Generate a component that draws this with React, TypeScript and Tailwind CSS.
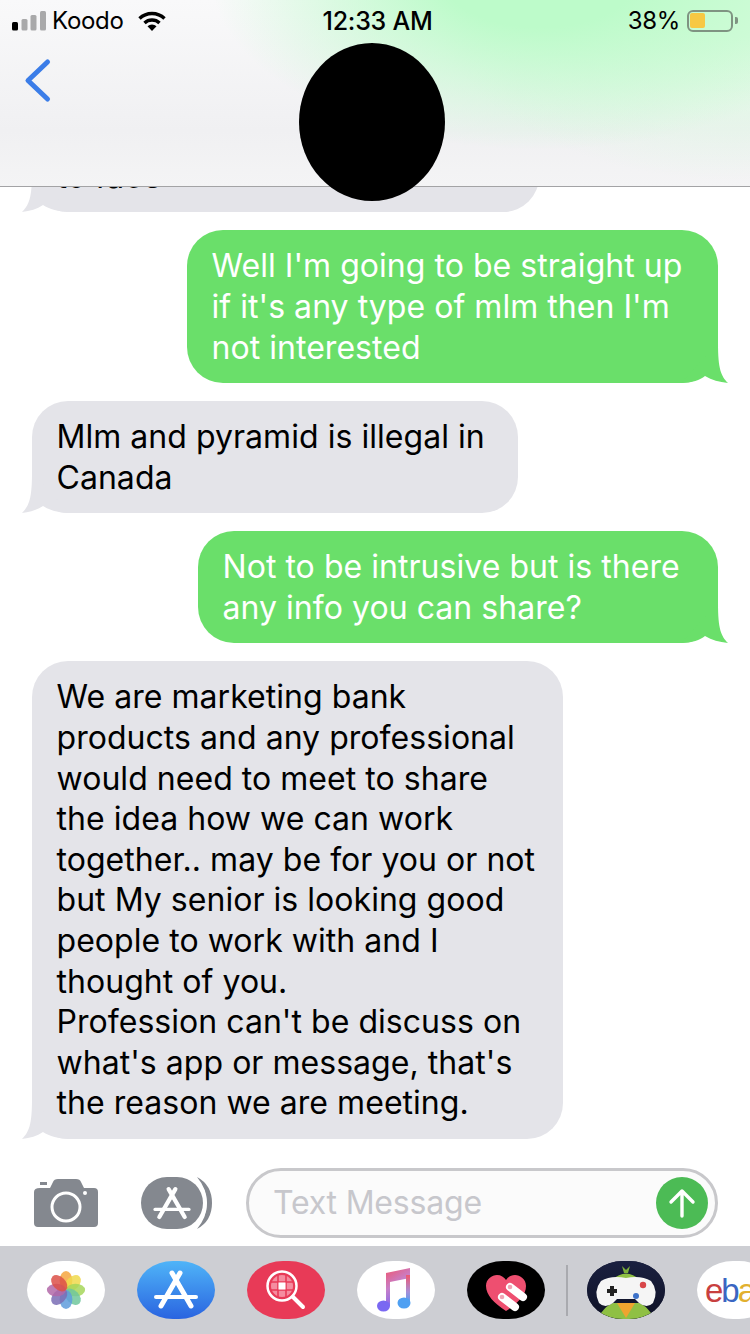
import type { ReactNode } from "react";

const AppA = ({ className }: { className: string }) => (
  <svg viewBox="0 0 78 58" className={className} fill="none" stroke="currentColor" strokeLinecap="round">
    <path d="M43 12 L24 45 M35 12 L54 45" strokeWidth="5" />
    <path d="M19 36 H59" strokeWidth="4" />
  </svg>
);

const Tail = ({ side }: { side: "left" | "right" }) =>
  side === "right" ? (
    <svg viewBox="0 0 48 40" className="absolute right-[-11px] bottom-0 w-[48px] h-[40px] text-[#6adf6a]" fill="currentColor">
      <path d="M37 0 C37 26 40 33 47 40 C38 39 31 37 24 33 C19 37 11 40 0 40 Z" />
    </svg>
  ) : (
    <svg viewBox="0 0 48 40" className="absolute left-[-10px] bottom-0 w-[48px] h-[40px] text-[#e4e4e9]" fill="currentColor">
      <path d="M10 0 C10 26 7 33 0 40 C8 39 15 37 21 33 C27 37 37 40 48 40 Z" />
    </svg>
  );

const Bubble = ({ side, width, lines }: { side: "left" | "right"; width: string; lines: string[] }) => (
  <div
    className={
      side === "right"
        ? `relative self-end mr-[32px] ${width} rounded-[36px] bg-[#6adf6a] text-white pl-[24.5px] pr-[20px] pt-[16px] pb-[15px]`
        : `relative self-start ml-[32px] ${width} rounded-[36px] bg-[#e4e4e9] text-black pl-[24.5px] pr-[20px] pt-[16px] pb-[15px]`
    }
  >
    <Tail side={side} />
    <div className="relative">
      {lines.map((line) => (
        <div key={line} className="whitespace-nowrap">
          {line}
        </div>
      ))}
    </div>
  </div>
);

const Pill = ({ className, children }: { className: string; children: ReactNode }) => (
  <div className={`relative shrink-0 w-[78px] h-[58px] rounded-[36px/29px] overflow-hidden flex items-center ${className}`}>
    {children}
  </div>
);

const petals = ["#f6a63e", "#f0d94c", "#a6d65b", "#70c79c", "#5f9cdc", "#7a6db5", "#b268a8", "#dc5048"];

const Photos = () => (
  <svg viewBox="0 0 44 44" className="w-[40px] h-[40px]">
    {petals.map((c, i) => (
      <ellipse key={c} cx="22" cy="11.5" rx="7" ry="10.5" fill={c} fillOpacity="0.85" transform={`rotate(${i * 45} 22 22)`} />
    ))}
  </svg>
);

const Globe = () => (
  <svg viewBox="0 0 78 58" className="w-[78px] h-[58px]" fill="none" stroke="#fff">
    <circle cx="35" cy="25" r="14.5" strokeWidth="2.5" />
    <circle cx="35" cy="25" r="11" fill="#f58da0" stroke="none" />
    <path d="M24 21 H46 M24 29 H46 M31 14 V36 M39 14 V36" stroke="#e83a57" strokeWidth="1.6" />
    <rect x="31.5" y="21.5" width="7" height="7" fill="#fff" stroke="none" />
    <path d="M46 36 L56 46" strokeWidth="4" strokeLinecap="round" />
  </svg>
);

const Music = () => (
  <svg viewBox="0 0 78 58" className="w-[78px] h-[58px]">
    <defs>
      <linearGradient id="note" x1="0" y1="0" x2="0.4" y2="1">
        <stop offset="0" stopColor="#f0566f" />
        <stop offset="0.5" stopColor="#c77fc9" />
        <stop offset="1" stopColor="#7a68f2" />
      </linearGradient>
      <linearGradient id="noteB" x1="0" y1="0" x2="0" y2="1">
        <stop offset="0" stopColor="#f0566f" />
        <stop offset="0.6" stopColor="#a78fd8" />
        <stop offset="1" stopColor="#4fa0f2" />
      </linearGradient>
    </defs>
    <path d="M29 12 L53 7 V17 L33 21 V45 H29 Z" fill="url(#note)" />
    <path d="M49 14 H53 V42 H49 Z" fill="url(#noteB)" />
    <ellipse cx="26.5" cy="45" rx="6.5" ry="5.5" fill="#7a68f2" />
    <ellipse cx="47" cy="42" rx="6.5" ry="5.5" fill="#4fa0f2" />
  </svg>
);

const Heart = () => (
  <svg viewBox="0 0 78 58" className="w-[78px] h-[58px]">
    <path d="M39 50 C27 42 19 34 19 25 C19 18 25 14 30 14 C34 14 37 16 39 19 C41 16 44 14 48 14 C53 14 59 18 59 25 C59 34 51 42 39 50 Z" fill="#ee4f70" />
    <path d="M43 26 L56 36 M35 36 L48 46" stroke="#fff" strokeWidth="8" strokeLinecap="round" />
    <circle cx="43" cy="26" r="2.3" fill="#f0a5b5" />
    <circle cx="35" cy="36" r="2.3" fill="#f0a5b5" />
  </svg>
);

const Game = () => (
  <svg viewBox="0 0 78 58" className="w-[78px] h-[58px]">
    <defs>
      <linearGradient id="navy" x1="0" y1="0" x2="0" y2="1">
        <stop offset="0" stopColor="#1a2040" />
        <stop offset="1" stopColor="#0f1226" />
      </linearGradient>
    </defs>
    <rect width="78" height="58" fill="url(#navy)" />
    <path d="M25 19 Q39 6 53 19 Z" fill="#8fc044" />
    <path d="M35 5 L39 9 L43 5 L41 12 H37 Z" fill="#7db03a" />
    <path d="M14 52 Q20 44 26 42 H52 Q58 44 64 52 L58 58 H20 Z" fill="#8fc044" />
    <path d="M14 20 Q24 14 39 17 Q54 14 64 20 Q72 30 66 42 Q60 48 52 42 L48 38 H30 L26 42 Q18 48 12 42 Q6 30 14 20 Z" fill="#f5f5f5" />
    <path d="M25 25 V35 M20 30 H30" stroke="#222" strokeWidth="4" />
    <circle cx="56" cy="24" r="3.2" fill="#d8474a" />
    <circle cx="49" cy="35" r="3" fill="#3d72c9" />
    <path d="M30 42 H48 L39 57 Z" fill="#efa42f" />
  </svg>
);

export default function App() {
  return (
    <div className="relative w-[750px] h-[1334px] overflow-hidden bg-white flex flex-col font-['Inter','Liberation_Sans',sans-serif]">
      {/* nav bar with the blurred green showing through */}
      <header className="relative shrink-0 h-[187px] border-b border-[#a3a3a5] bg-[radial-gradient(ellipse_330px_175px_at_540px_-25px,#bdfbca_30%,transparent_100%),radial-gradient(ellipse_300px_190px_at_730px_-10px,#d8fbde_25%,transparent_100%),linear-gradient(180deg,#f9f9fa_0%,#f0f0f2_70%,#f4f4f5_100%)]">
        <div className="flex items-center justify-between h-[41px] text-black">
          <div className="flex items-center w-[200px] pl-[12px]">
            <svg viewBox="0 0 34 20" className="w-[34px] h-[20px] shrink-0">
              <rect x="0" y="11" width="6" height="8.5" rx="1.5" fill="#000" />
              <rect x="9.5" y="8" width="6" height="11.5" rx="1.5" fill="#a9a9aa" />
              <rect x="18.5" y="4" width="6" height="15.5" rx="1.5" fill="#a9a9aa" />
              <rect x="28" y="0" width="6" height="19.5" rx="1.5" fill="#a9a9aa" />
            </svg>
            <span className="ml-[6px] text-[24px] leading-none tracking-[-0.3px]">Koodo</span>
            <svg viewBox="0 0 28 20" className="ml-[14px] w-[28px] h-[20px] shrink-0" fill="none" stroke="#000" strokeWidth="3.4">
              <path d="M1.5 7.5 A18 18 0 0 1 26.5 7.5" />
              <path d="M6.5 12 A11 11 0 0 1 21.5 12" />
              <path d="M14 20 L9.5 15.2 A6.5 6.5 0 0 1 18.5 15.2 Z" fill="#000" stroke="none" />
            </svg>
          </div>
          <span className="ml-[5px] mt-[1px] text-[25px] font-medium leading-none tracking-[-0.25px]">12:33 AM</span>
          <div className="flex items-center justify-end w-[200px] pr-[12px]">
            <span className="text-[24px] leading-none tracking-[-0.3px]">38%</span>
            <div className="ml-[7px] w-[46px] h-[22px] rounded-[6px] border-[2.5px] border-[#7f9382] p-[1.5px]">
              <div className="w-[15px] h-full rounded-[2px] bg-[#f7c843]" />
            </div>
            <div className="ml-[2px] w-[3px] h-[7px] rounded-r-[2px] bg-[#7f9382]" />
          </div>
        </div>
        <svg viewBox="0 0 30 46" className="absolute left-[23px] top-[58px] w-[30px] h-[46px]" fill="none" stroke="#3b7de8" strokeWidth="5" strokeLinecap="round" strokeLinejoin="round">
          <path d="M24.5 4 L5 22.5 L24.5 41" />
        </svg>
      </header>

      <main className="flex-1 min-h-0 overflow-hidden flex flex-col justify-end gap-[18px] text-[32px] leading-[40.6px] tracking-[0.04px]">
        <Bubble side="left" width="w-[507px]" lines={["to face"]} />
        <Bubble side="right" width="w-[531px]" lines={["Well I'm going to be straight up", "if it's any type of mlm then I'm", "not interested"]} />
        <Bubble side="left" width="w-[486px]" lines={["Mlm and pyramid is illegal in", "Canada"]} />
        <Bubble side="right" width="w-[520px]" lines={["Not to be intrusive but is there", "any info you can share?"]} />
        <Bubble
          side="left"
          width="w-[531px]"
          lines={[
            "We are marketing bank",
            "products and any professional",
            "would need to meet to share",
            "the idea how we can work",
            "together.. may be for you or not",
            "but My senior is looking good",
            "people to work with and I",
            "thought of you.",
            "Profession can't be discuss on",
            "what's app or message, that's",
            "the reason we are meeting.",
          ]}
        />
      </main>

      <div className="shrink-0 h-[107px] flex items-center pl-[34px] pr-[32px] pt-[21px]">
        <svg viewBox="0 0 64 48" className="w-[64px] h-[48px] shrink-0">
          <path d="M6 9 H16 L19 3 Q20 0 24 0 H42 Q46 0 47 3 L50 9 H60 Q64 9 64 13 V44 Q64 48 60 48 H4 Q0 48 0 44 V13 Q0 9 6 9 Z" fill="#84888f" />
          <rect x="6" y="3" width="7" height="3" fill="#84888f" />
          <circle cx="32" cy="28" r="14" fill="none" stroke="#fff" strokeWidth="3" />
          <circle cx="51" cy="14" r="2" fill="#fff" />
        </svg>
        <div className="relative ml-[43px] w-[71px] h-[52px] shrink-0">
          <svg viewBox="0 0 71 52" className="absolute inset-0 w-[71px] h-[52px]" fill="none">
            <path d="M56 0 Q71 8 71 26 Q71 44 56 52 Q66 40 66 26 Q66 12 56 0 Z" fill="#84888f" />
            <rect x="0" y="0" width="62" height="52" rx="26" fill="#84888f" />
            <path d="M52 1 Q65 10 65 26 Q65 42 52 51" stroke="#fff" strokeWidth="1.5" />
          </svg>
          <div className="absolute left-[-2px] top-0 w-[66px] h-[52px] text-white flex items-center">
            <AppA className="w-[66px] h-[49px]" />
          </div>
        </div>
        <div className="ml-[34px] flex-1 h-[70px] rounded-full border-[3px] border-[#c8c8cb] bg-[#fbfbfb] flex items-center justify-between pl-[24px] pr-[7px]">
          <span className="text-[32px] text-[#c7c7cc] leading-none tracking-[-0.2px]">Text Message</span>
          <div className="w-[52px] h-[52px] rounded-full bg-[#4cbb55] flex items-center justify-center">
            <svg viewBox="0 0 28 30" className="w-[28px] h-[30px]" fill="none" stroke="#fff" strokeWidth="3.4" strokeLinecap="round" strokeLinejoin="round">
              <path d="M14 28 V3 M3 14 L14 3 L25 14" />
            </svg>
          </div>
        </div>
      </div>

      <nav className="shrink-0 h-[88px] bg-[#cdced3] flex items-center pl-[27px] gap-[32px] overflow-hidden">
        <Pill className="bg-white justify-center">
          <Photos />
        </Pill>
        <Pill className="bg-[linear-gradient(180deg,#4fb4f8,#2a64e0)] text-white justify-center">
          <AppA className="w-[78px] h-[58px]" />
        </Pill>
        <Pill className="bg-[#e83a57] justify-center">
          <Globe />
        </Pill>
        <Pill className="bg-white justify-center">
          <Music />
        </Pill>
        <Pill className="bg-black justify-center">
          <Heart />
        </Pill>
        <div className="shrink-0 w-[2px] h-[51px] ml-[-11px] mr-[-13px] bg-[#a9aaaf]" />
        <Pill className="bg-[#141833] justify-center">
          <Game />
        </Pill>
        <Pill className="bg-white justify-start pl-[8px]">
          <span className="font-['Liberation_Sans',sans-serif] text-[33px] leading-none tracking-[-2px] whitespace-nowrap">
            <span className="text-[#c8403f]">e</span>
            <span className="text-[#3a66c2]">b</span>
            <span className="text-[#e2b02e]">a</span>
            <span className="text-[#86b817]">y</span>
          </span>
        </Pill>
      </nav>

      {/* redaction blot over the contact photo */}
      <div className="absolute left-[299px] top-[43px] w-[146px] h-[158px] rounded-[50%] bg-black" />
    </div>
  );
}
